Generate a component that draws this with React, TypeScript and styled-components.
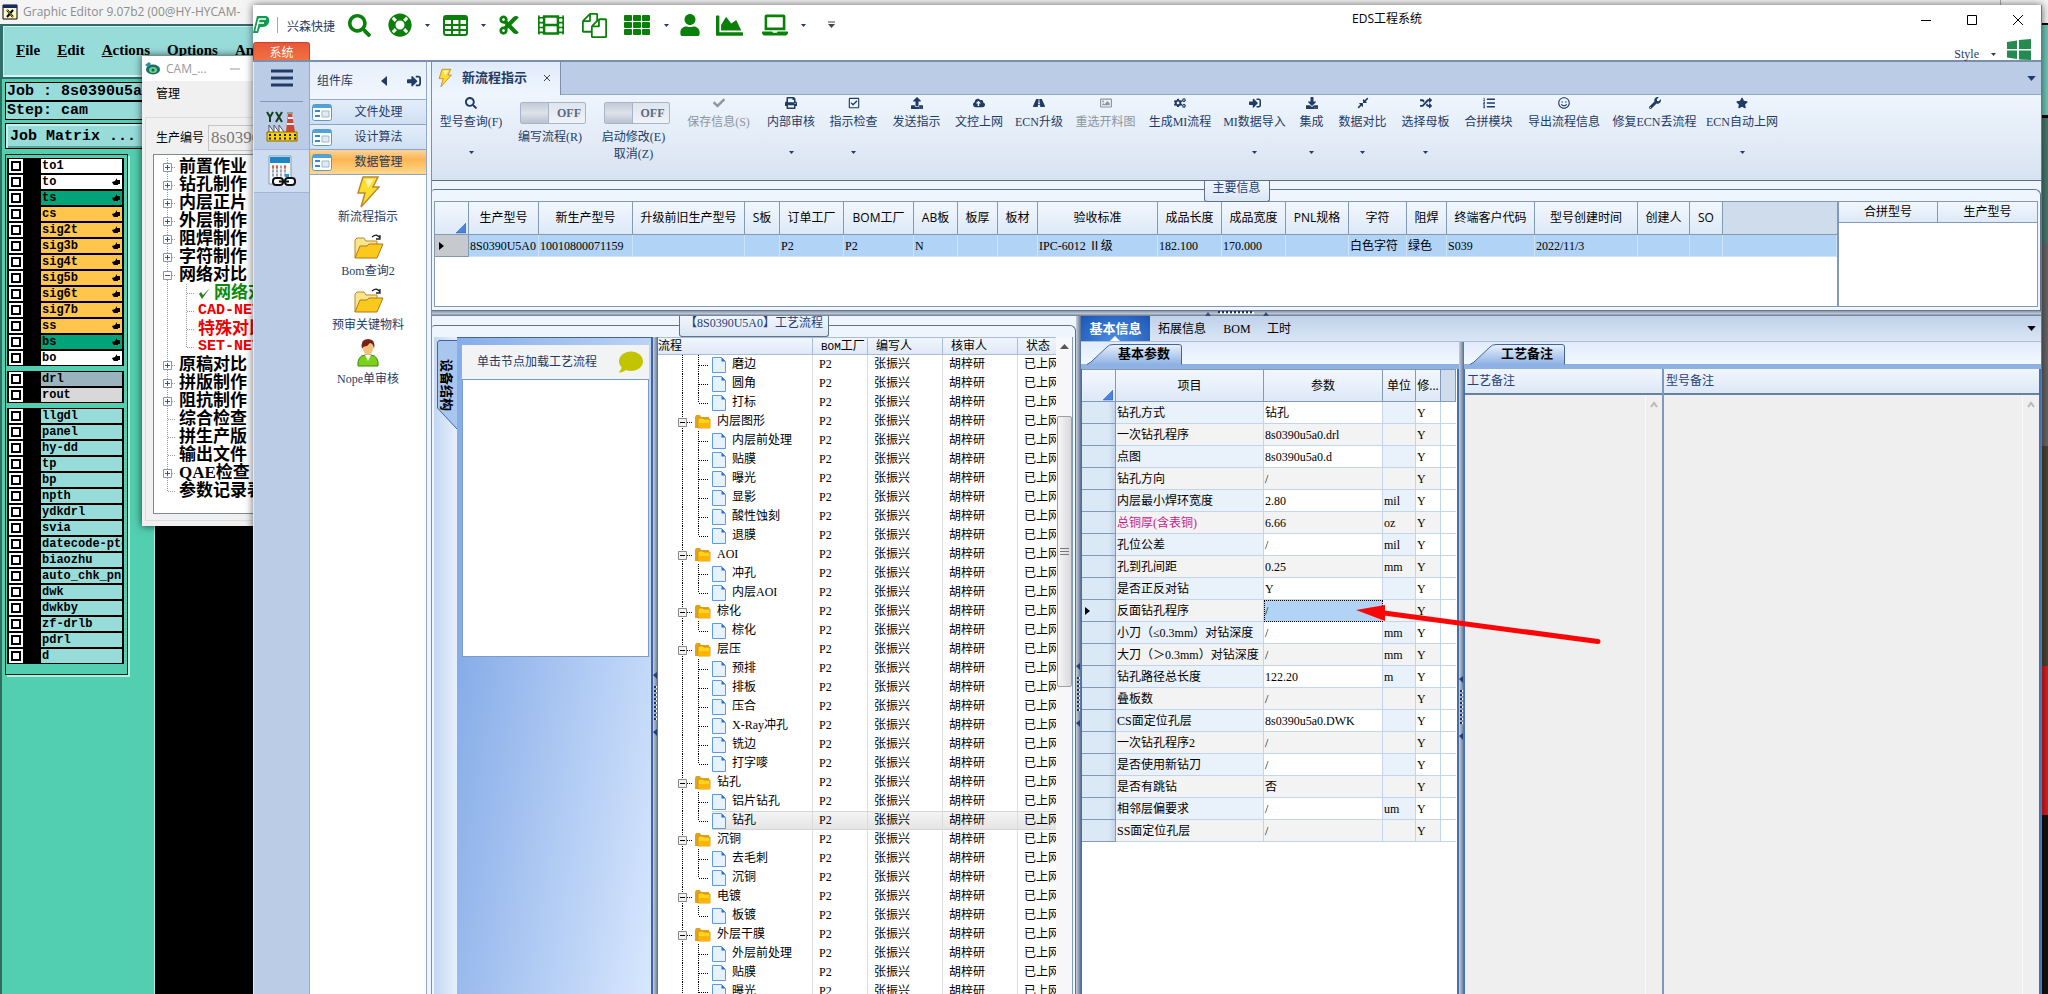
import React from 'react';
import styled, { createGlobalStyle, css } from 'styled-components';
import {
  FaSearch, FaLifeRing, FaCut, FaFilm, FaUser, FaChartArea, FaLaptop, FaCheck, FaPrint,
  FaRegCheckSquare, FaUpload, FaCloudUploadAlt, FaRoad, FaRegImage, FaCogs, FaSignInAlt, FaDownload,
  FaCompressAlt, FaRandom, FaListOl, FaRegSmile, FaWrench, FaStar, FaComment,
} from 'react-icons/fa';

const song = '"Liberation Serif", "Noto Sans CJK SC", serif';
const yahei = '"Open Sans", "Noto Sans CJK SC", sans-serif';
const mono = '"Liberation Mono", "Noto Sans CJK SC", monospace';
const navy = '#1f3b66';
const line = '#8299b8';

const Global = createGlobalStyle`
  * { box-sizing: border-box; }
  html, body { margin: 0; height: 100%; overflow: hidden; }
  body { font: 12px/16px ${song}; color: #000; background: #000; }
  button { font: inherit; color: inherit; background: none; border: 0; padding: 0; margin: 0; }
  table { border-collapse: separate; border-spacing: 0; table-layout: fixed; }
  th { font-weight: normal; }
  td, th { padding: 0; white-space: nowrap; overflow: hidden; }
`;

const Desktop = styled.main`
  position: relative;
  height: 100vh;
  overflow: hidden;
  background: #000;
`;

/* ---------- Graphic Editor window ---------- */

const EditorWindow = styled.section`
  position: absolute;
  inset: 0;
  display: flex;
  flex-direction: column;
  background: #000;
`;
const EditorTitle = styled.header`
  flex: none;
  display: flex;
  align-items: center;
  gap: 5px;
  height: 24px;
  padding-left: 2px;
  background: #f4f4f4;
  color: #8c8c8c;
  font: 12px/24px ${yahei};
  white-space: nowrap;
`;
const EditorMenu = styled.nav`
  flex: none;
  display: flex;
  gap: 17px;
  height: 55px;
  padding: 15px 0 0 13px;
  background: #98dcda;
  border: solid #2f6d68;
  border-width: 2px 0 2px 3px;
  box-shadow: inset 1px 1px #c8f0ee, inset 0 -2px #d6f5f3;
`;
const EditorMenuItem = styled.button`
  height: 18px;
  font: bold 15px/18px ${song};
  &::first-letter { text-decoration: underline; }
`;
const EditorBody = styled.div`
  flex: 1;
  width: 155px;
  padding: 3px 0 0 3px;
  background: #52cfb0;
  border-left: 2px solid #2f6d5c;
  border-right: 1px solid #b5eedd;
`;
const JobLine = styled.div<{ $button?: boolean }>`
  height: ${p => (p.$button ? 26 : 19)}px;
  margin-top: ${p => (p.$button ? 3 : 0)}px;
  margin-right: -40px;
  padding-left: ${p => (p.$button ? 4 : 1)}px;
  background: #98dcda;
  border: 1px solid #000;
  box-shadow: ${p => (p.$button ? 'inset 2px 2px #c8f0ee, inset -2px -2px #5aa9a0' : 'none')};
  font: bold 15px/${p => (p.$button ? 25 : 18)}px ${mono};
  white-space: pre;
`;
const LayerFrame = styled.div`
  display: flex;
  flex-direction: column;
  gap: 5px;
  width: 123px;
  height: 521px;
  margin-top: 5px;
  padding: 3px 3px 0 1px;
  border: 1px solid #04251c;
  box-shadow: 2px 2px #b5eedd;
`;
const LayerGroup = styled.ul`
  margin: 0;
  padding: 0;
  list-style: none;
  background: #000;
`;
const LayerRow = styled.li`
  display: flex;
  height: 16px;
  padding: 1px 2px;
`;
const LayerCheck = styled.input`
  appearance: none;
  width: 14px;
  height: 14px;
  margin: 0 18px 0 0;
  flex: none;
  background: #fff;
  border: 2px solid #fff;
  box-shadow: inset 0 0 0 2px #000;
`;
const LayerName = styled.label<{ $bg: string }>`
  flex: 1;
  display: flex;
  justify-content: space-between;
  align-items: center;
  overflow: hidden;
  padding: 0 2px 0 1px;
  background: ${p => p.$bg};
  font: bold 12px/14px ${mono};
  white-space: nowrap;
`;

const layerGroups: [string, string, boolean?][][] = [
  [
    ['to1', '#fff'], ['to', '#fff', true], ['ts', '#00a478', true], ['cs', '#ffc54c', true],
    ['sig2t', '#ffc54c', true], ['sig3b', '#ffc54c', true], ['sig4t', '#ffc54c', true],
    ['sig5b', '#ffc54c', true], ['sig6t', '#ffc54c', true], ['sig7b', '#ffc54c', true],
    ['ss', '#ffc54c', true], ['bs', '#00a478', true], ['bo', '#fff', true],
  ],
  [['drl', '#9bb3bd'], ['rout', '#d8d8d8']],
  ['llgdl', 'panel', 'hy-dd', 'tp', 'bp', 'npth', 'ydkdrl', 'svia', 'datecode-ptd', 'biaozhu',
    'auto_chk_pnl', 'dwk', 'dwkby', 'zf-drlb', 'pdrl', 'd'].map(n => [n, '#98dcda'] as [string, string]),
];

const Hand = () => (
  <svg width="8" height="8" viewBox="0 0 8 8"><path d="M0 4l3-1 2-3v2h3v4H6v1H2L1 6z" /></svg>
);
const XIcon = () => (
  <svg width="16" height="16" viewBox="0 0 16 16">
    <path d="M1 1h14v14H1z" fill="#fffbd0" stroke="#000" /><path d="M1 1h14v3H1z" fill="#122a66" />
    <path d="M5 6l6 7M11 6l-6 7" stroke="#000" strokeWidth="2" /><path d="M5 6l6 7" stroke="#d9c400" />
  </svg>
);

const GraphicEditor = () => (
  <EditorWindow>
    <EditorTitle><XIcon />Graphic Editor 9.07b2 (00@HY-HYCAM-</EditorTitle>
    <EditorMenu>
      {['File', 'Edit', 'Actions', 'Options', 'Ana'].map(m => <EditorMenuItem key={m}>{m}</EditorMenuItem>)}
    </EditorMenu>
    <EditorBody>
      <JobLine>Job : 8s0390u5a</JobLine>
      <JobLine>Step: cam</JobLine>
      <JobLine $button>Job Matrix ...</JobLine>
      <LayerFrame>
        {layerGroups.map((g, i) => (
          <LayerGroup key={i}>
            {g.map(([name, bg, hand]) => (
              <LayerRow key={name}>
                <LayerCheck type="checkbox" id={`layer-${name}`} />
                <LayerName htmlFor={`layer-${name}`} $bg={bg}>{name}{hand && <Hand />}</LayerName>
              </LayerRow>
            ))}
          </LayerGroup>
        ))}
      </LayerFrame>
    </EditorBody>
  </EditorWindow>
);

const SideWindow = styled.section`
  position: absolute;
  inset: 0 0 0 auto;
  width: 48px;
  background: linear-gradient(#f4f4f4 23px, #000 23px 25px, #6fc9b9 25px 115px, #000 115px 118px, #47796e 118px 243px,
    #666 243px 446px, #4a4433 446px 666px, #d81e1e 666px 815px, #111 815px);
  border-left: 1px solid #aaa;
`;

/* ---------- CAM window ---------- */

const CamWindow = styled.section`
  position: absolute;
  left: 142px;
  top: 56px;
  width: 240px;
  height: 470px;
  display: flex;
  flex-direction: column;
  background: #f0f0f0;
  box-shadow: 0 0 8px rgba(0, 0, 0, 0.7);
`;
const CamTitle = styled.header`
  display: flex;
  align-items: center;
  height: 25px;
  padding-left: 3px;
  background: #fff;
  color: #999;
  font: 12px/24px ${yahei};
  gap: 6px;
  & > span { width: 58px; }
`;
const CamMenu = styled.button`
  align-self: flex-start;
  height: 25px;
  margin: 0 0 11px 14px;
  font-size: 12px;
`;
const CamGroup = styled.div`
  flex: 1;
  display: flex;
  flex-direction: column;
  margin: 0 0 5px 3px;
  border: 1px solid #dcdcdc;
`;
const CamField = styled.label`
  display: flex;
  align-items: center;
  gap: 4px;
  height: 26px;
  margin: 7px 0 3px 10px;
`;
const CamInput = styled.input`
  width: 120px;
  height: 26px;
  padding: 0 2px;
  border: 1px solid #c5c5c5;
  background: #f0f0f0;
  color: #777;
  font: 17px/24px ${song};
`;
const CamTree = styled.ul`
  flex: 1;
  margin: 0 0 6px 7px;
  padding: 3px 0 0 9px;
  list-style: none;
  background: #fff;
  border: 1px solid #7a8a99;
`;
const CamNode = styled.li<{ $color?: string; $latin?: boolean }>`
  display: flex;
  align-items: center;
  gap: 3px;
  height: 18px;
  color: ${p => p.$color ?? '#000'};
  font: bold ${p => (p.$latin ? 15 : 17)}px/18px ${p => (p.$latin ? mono : song)};
  white-space: nowrap;
`;
type CamRow = { t: string; k: '+' | '-' | '.' | 'c'; c?: string; end?: boolean; ok?: boolean; latin?: boolean };
const camRows: CamRow[] = [
  { t: '前置作业', k: '+' }, { t: '钻孔制作', k: '+' }, { t: '内层正片', k: '+' }, { t: '外层制作', k: '+' },
  { t: '阻焊制作', k: '+' }, { t: '字符制作', k: '+' }, { t: '网络对比', k: '-' },
  { t: '网络对比', k: 'c', c: '#0b8a0b', ok: true }, { t: 'CAD-NET', k: 'c', c: '#e00', latin: true },
  { t: '特殊对比', k: 'c', c: '#e00' }, { t: 'SET-NET', k: 'c', c: '#e00', end: true, latin: true },
  { t: '原稿对比', k: '+' }, { t: '拼版制作', k: '+' }, { t: '阻抗制作', k: '+' }, { t: '综合检查', k: '.' },
  { t: '拼生产版', k: '.' }, { t: '输出文件', k: '.' }, { t: 'QAE检查', k: '+' }, { t: '参数记录表', k: '.', end: true },
];
const CamGuide = ({ row }: { row: CamRow }) => {
  const child = row.k === 'c';
  return (
    <svg width={child ? 32 : 13} height="18" fill="none" stroke="#999">
      <path d={`M4.5 0V${!child && row.end ? 9 : 18}`} strokeDasharray="1 1" />
      {child
        ? <path d={`M23.5 0V${row.end ? 9 : 18}M24 9.5h8`} strokeDasharray="1 1" />
        : <path d="M5 9.5h8" strokeDasharray="1 1" />}
      {(row.k === '+' || row.k === '-') && (
        <>
          <path d="M.5 5.5h8v8h-8z" fill="#fff" stroke="#8a96a8" />
          <path d={row.k === '+' ? 'M2 9.5h5M4.5 7v5' : 'M2 9.5h5'} stroke="#3b4f9a" />
        </>
      )}
    </svg>
  );
};
const CamTool = () => (
  <CamWindow>
    <CamTitle>
      <svg width="15" height="13" viewBox="0 0 15 13">
        <ellipse cx="8" cy="7.500" rx="7" ry="5" fill="#1b6f6a" /><ellipse cx="8" cy="8" rx="4" ry="3" fill="#6fd08c" />
        <circle cx="8" cy="8" r="1.500" fill="#164" /><path d="M0 3l4-3 2 2-3 3z" fill="#2790a0" />
      </svg>
      <span>CAM_...</span>
      <svg width="10" height="2"><path d="M0 1h10" stroke="#999" /></svg>
    </CamTitle>
    <CamMenu>管理</CamMenu>
    <CamGroup>
      <CamField>生产编号<CamInput defaultValue="8s0390u5a0" /></CamField>
      <CamTree>
        {camRows.map((r, i) => (
          <CamNode key={i} $color={r.c} $latin={r.latin}>
            <CamGuide row={r} />
            {r.ok && <svg width="13" height="13" viewBox="0 0 13 13"><path d="M1 7l3 5 8-11-7 7-2-3z" fill="#2e7d1e" /></svg>}
            {r.t}
          </CamNode>
        ))}
      </CamTree>
    </CamGroup>
  </CamWindow>
);

/* ---------- EDS window ---------- */

const EdsWindow = styled.section`
  position: absolute;
  left: 253px;
  right: 6px;
  top: 5px;
  bottom: -80px;
  display: flex;
  flex-direction: column;
  background: #fff;
  border-right: 1px solid #66788f;
  box-shadow: 0 0 8px rgba(0, 0, 0, 0.6);
  color: ${navy};
`;
const TitleBar = styled.header`
  flex: none;
  display: flex;
  height: 34px;
`;
const QuickBar = styled.div`
  width: 618px;
  padding-top: 6px;
  display: flex;
  align-items: center;
  color: #0a800a;
`;
const Brand = styled.span`
  width: 61px;
  margin: 3px 0 0 9px;
  color: ${navy};
`;
const QuickButton = styled.button<{ $w: number }>`
  width: ${p => p.$w}px;
  height: 28px;
  display: flex;
  align-items: center;
  gap: 13px;
  svg { flex: none; }
`;
const AppTitle = styled.h1`
  flex: 1;
  margin: 0;
  text-align: center;
  color: #000;
  font: 12px/28px ${yahei};
`;
const WindowButton = styled.button`
  width: 46px;
  height: 30px;
  display: grid;
  place-items: center;
`;
const SystemRow = styled.div`
  flex: none;
  display: flex;
  align-items: flex-end;
  height: 23px;
  padding-right: 9px;
  border-bottom: 2px solid #7b8fad;
`;
const SystemTab = styled.button`
  width: 57px;
  height: 18px;
  margin-right: auto;
  background: linear-gradient(#e8583a, #f2713f);
  border: 1px solid #c7442a;
  border-bottom: 0;
  border-radius: 3px 3px 0 0;
  color: #fff;
  line-height: 20px;
  overflow: hidden;
`;
const StyleButton = styled.button`
  display: flex;
  align-items: center;
  gap: 12px;
  margin-right: 11px;
  line-height: 12px;
`;
const Caret = ({ size = 5, color = navy }: { size?: number; color?: string }) => (
  <svg width={size} height={(size + 1) / 2} viewBox="0 0 10 6"><path d="M0 0h10L5 6z" fill={color} /></svg>
);

const Workspace = styled.div`
  flex: 1;
  min-height: 0;
  display: flex;
  background: #eef5fd;
`;
const Rail = styled.nav`
  width: 56px;
  display: flex;
  flex-direction: column;
  align-items: center;
  background: #bacce6;
  border-left: 1px solid #e3ebf7;
`;
const RailButton = styled.button<{ $h: number; $active?: boolean }>`
  width: 100%;
  height: ${p => p.$h}px;
  display: grid;
  place-items: center;
  ${p => p.$active && css`background: #cddcf0; border: solid #a3b6d3; border-width: 1px 0;`}
`;
const RailRule = styled.hr`
  width: 43px;
  margin: 6px 0 0;
  border: 0;
  border-top: 1px solid #8299bd;
`;
const Library = styled.aside`
  width: 118px;
  margin-right: 4px;
  display: flex;
  flex-direction: column;
  background: #fff;
  border: solid #93a9cd;
  border-width: 0 1px;
`;
const LibraryHead = styled.header`
  display: flex;
  align-items: center;
  height: 38px;
  padding-left: 7px;
  background: linear-gradient(#e6effa, #f2f7fe);
  border-bottom: 1px solid #93a9cd;
  font: 12px/36px ${yahei};
  & > span { width: 64px; }
`;
const HeadButton = styled.button`
  width: 26px;
  height: 20px;
  display: flex;
  align-items: center;
`;
const LibraryTab = styled.button<{ $active?: boolean }>`
  flex: none;
  display: flex;
  align-items: center;
  height: 25px;
  padding-left: 2px;
  border-bottom: 1px solid #8aa3c9;
  background: ${p => (p.$active ? 'linear-gradient(#fbd49c, #fbb552 40%, #ffd98e)' : 'linear-gradient(#e4eefa, #cfdff2)')};
  & > span { flex: 1; padding-right: 1px; text-align: center; }
`;
const LibraryItem = styled.button`
  display: flex;
  flex-direction: column;
  align-items: center;
  height: 54px;
  padding-top: 1px;
  gap: 1px;
`;

const Main = styled.div`
  flex: 1;
  min-width: 0;
  display: flex;
  flex-direction: column;
  border-left: 1px solid #7b8fad;
`;
const DocTabs = styled.div`
  flex: none;
  display: flex;
  align-items: center;
  justify-content: space-between;
  height: 33px;
  padding-right: 5px;
  background: #bacce6;
  border-bottom: 1px solid #93a9c9;
`;
const DocTab = styled.div`
  display: flex;
  align-items: center;
  width: 129px;
  height: 33px;
  padding-left: 6px;
  gap: 10px;
  background: linear-gradient(#dfeafa, #eff6fe);
  border-right: 1px solid #7b8fad;
  font: bold 13px/32px ${song};
  white-space: nowrap;
`;
const CloseTab = styled.button`
  display: grid;
  margin-left: 6px;
`;
const Ribbon = styled.div`
  flex: none;
  display: flex;
  height: 86px;
  background: linear-gradient(#eef5fd, #d8e3f1);
  border-bottom: 1px solid #5b6b82;
`;
const RibbonButton = styled.button<{ $w: number }>`
  width: ${p => p.$w}px;
  height: 70px;
  padding-top: 2px;
  display: flex;
  flex-direction: column;
  align-items: center;
  gap: 5px;
  line-height: 16px;
  white-space: nowrap;
  &:disabled { color: #8f959d; }
  & > svg { flex: none; }
  & > svg + svg { margin-top: 16px; }
`;
const RibbonSwitch = styled.div<{ $w: number }>`
  width: ${p => p.$w}px;
  padding-top: 7px;
  display: flex;
  flex-direction: column;
  align-items: center;
  line-height: 17px;
  text-align: center;
`;
const Switch = styled.label`
  display: flex;
  width: 66px;
  height: 22px;
  margin: 0 0 5px 6px;
  background: linear-gradient(#dfe5ee, #f0f3f8);
  border: 1px solid #a9b5c6;
  border-radius: 2px;
  color: #5b6b82;
  font: bold 12px/20px ${song};
`;
const SwitchKnob = styled.input`
  appearance: none;
  width: 28px;
  height: 20px;
  margin: 0 8px 0 0;
  background: linear-gradient(#c3cbd8, #dde2ea 50%, #b9c2d0);
  border-right: 1px solid #a9b5c6;
`;

const Group = styled.section`
  position: relative;
  min-height: 0;
  display: flex;
  padding-top: 8px;
  background: #eef5fd;
`;
const GroupTop = styled(Group)`
  flex: none;
  height: 130px;
  border-bottom: 1px solid #66788f;
`;
const GroupFrame = styled.div`
  flex: 1;
  min-width: 0;
  display: flex;
  padding: 11px 2px 3px 2px;
  border: solid #5f728e;
  border-width: 1px 1px 0 0;
  border-radius: 3px 6px 0 0;
`;
const GroupLabel = styled.h2<{ $w: number }>`
  position: absolute;
  z-index: 1;
  top: 0;
  left: 50%;
  width: ${p => p.$w}px;
  height: 21px;
  margin: 0 0 0 -${p => p.$w / 2}px;
  background: linear-gradient(#f1f6fd, #dbe6f4);
  border: 1px solid #5f728e;
  border-top-width: 0;
  border-radius: 0 0 3px 3px;
  color: #24407a;
  font: 12px/15px ${song};
  text-align: center;
  white-space: nowrap;
`;
const Sheet = styled.div<{ $w?: number }>`
  flex: ${p => (p.$w ? 'none' : 1)};
  width: ${p => (p.$w ? p.$w + 'px' : 'auto')};
  min-width: 0;
  background: #fff;
  border: 1px solid ${line};
  color: #000;
`;
const InfoTable = styled.table<{ $head: number }>`
  width: 100%;
  th {
    height: ${p => p.$head}px;
    background: linear-gradient(#f2f7fe, #dde9f7);
    border: solid ${line};
    border-width: 0 1px 1px 0;
    font: 12px/20px ${yahei};
  }
  th:last-child { border-right: 0; }
  td { height: 22px; padding-left: 1px; background: #b0d3f6; border: solid #cfe3f8; border-width: 0 1px 1px 0; }
`;
const CornerCell = styled.th`
  && { vertical-align: bottom; text-align: right; padding-right: 2px; line-height: 0; }
`;
const FillHead = styled.th`
  && { background: #cfdcec; }
`;
const MarkerCell = styled.td`
  && { background: #c6cace; border-color: ${line}; padding-left: 4px; }
`;

const infoCols: [string, number, string][] = [
  ['生产型号', 70, '8S0390U5A0'], ['新生产型号', 94, '10010800071159'], ['升级前旧生产型号', 112, ''], ['S板', 35, ''],
  ['订单工厂', 64, 'P2'], ['BOM工厂', 70, 'P2'], ['AB板', 44, 'N'], ['板厚', 40, ''], ['板材', 40, ''],
  ['验收标准', 120, 'IPC-6012 Ⅱ级'], ['成品长度', 64, '182.100'], ['成品宽度', 64, '170.000'], ['PNL规格', 63, ''],
  ['字符', 58, '白色字符'], ['阻焊', 40, '绿色'], ['终端客户代码', 88, 'S039'], ['型号创建时间', 103, '2022/11/3'],
  ['创建人', 52, ''], ['SO', 33, ''],
];
const Corner = () => <svg width="11" height="14"><path d="M11 3v10H1z" fill="#4a84de" stroke="#2a5fb0" strokeWidth=".5" /></svg>;
const Marker = () => <svg width="5" height="8"><path d="M0 0l5 4-5 4z" /></svg>;

const Splitter = styled.div<{ $across?: boolean }>`
  flex: none;
  display: grid;
  place-items: center;
  overflow: hidden;
  ${p => (p.$across
    ? 'height: 5px; background: linear-gradient(#8896a8, #b9c4d1 50%, #68788e);'
    : 'width: 5px; background: linear-gradient(90deg, #c6d0dc, #8a98ab 60%, #4e6c9b);')}
`;
const Grip = ({ across }: { across?: boolean }) => across ? (
  <svg width="64" height="5">
    <path d="M0 5l3-4 3 4zM58 5l3-4 3 4z" fill="#3a4d75" />
    <path d="M14 2h36" stroke="#fff" strokeWidth="2" strokeDasharray="2 2" strokeDashoffset="-1" />
    <path d="M13 1h36" stroke="#1f2f55" strokeWidth="2" strokeDasharray="2 2" />
  </svg>
) : (
  <svg width="5" height="64">
    <path d="M4 0v7L0 3zM4 57v7l-4-4z" fill="#223d7a" />
    <path d="M3 14v36" stroke="#fff" strokeWidth="2" strokeDasharray="2 2" />
    <path d="M2 14v36" stroke="#1f2f66" strokeWidth="2" strokeDasharray="2 2" />
  </svg>
);

const Lower = styled.div`
  flex: 1;
  min-height: 0;
  display: flex;
  background: #eef5fd;
`;
const FlowGroup = styled(Group)`
  width: 644px;
  padding-top: 9px;
`;
const VerticalTabs = styled.div`
  flex: none;
  position: relative;
  width: 23px;
  background: linear-gradient(90deg, #c3d7f3, #e7f0fc);
`;
const VerticalTab = styled.button`
  position: absolute;
  left: 2px;
  top: 3px;
  width: 21px;
  height: 90px;
  & > svg { position: absolute; left: 0; top: 0; }
  & > span {
    position: relative;
    display: block;
    height: 70px;
    padding: 0 2px;
    writing-mode: vertical-rl;
    text-orientation: sideways;
    text-align: center;
    font: bold 13px/17px ${song};
    color: #000;
  }
`;
const DevicePanel = styled.div`
  width: 196px;
  display: flex;
  flex-direction: column;
  padding: 7px 2px 0 5px;
  border: solid #3f66a3;
  border-width: 1px 2px 0 0;
  background: linear-gradient(90deg, #86ade8, #bcd3f4);
`;
const DeviceHead = styled.header`
  display: flex;
  align-items: center;
  justify-content: space-between;
  height: 34px;
  padding: 0 6px 0 15px;
  background: #f2f3f5;
`;
const DeviceList = styled.div`
  height: 278px;
  background: #fff;
  border: 1px solid #7c9bc9;
`;
const DeviceRest = styled.div`
  flex: 1;
  margin: 0 -2px 0 -5px;
  background: linear-gradient(100deg, #86ace8, #dceaff);
`;
const TreePane = styled.div`
  flex: 1;
  min-width: 0;
  display: flex;
  background: #fff;
  border-right: 1px solid ${line};
  color: #000;
`;
const TreeClip = styled.div`
  flex: 1;
  min-width: 0;
  overflow: hidden;
`;
const TreeTable = styled.table`
  width: 100%;
  th {
    height: 18px;
    padding-left: 8px;
    background: linear-gradient(#f1f6fd, #dfe9f6);
    border: solid #a9bdd8;
    border-width: 1px 1px 1px 0;
    text-align: left;
    line-height: 14px;
  }
  th:first-child { padding-left: 0; }
  td { height: 19px; padding-left: 6px; border-right: 1px solid #dcdcdc; line-height: 17px; }
  td:first-child { padding-left: 0; }
  td:last-child, th:last-child { border-right: 0; }
`;
const Latin = styled.span`
  font: 11px/14px ${mono};
`;
const TreeName = styled.div`
  display: flex;
  height: 19px;
  align-items: center;
`;
const TreeText = styled.span`
  flex: 1;
  display: flex;
  align-items: center;
  gap: 6px;
  height: 19px;
`;
const TreeRow = styled.tr<{ $active?: boolean }>`
  ${p => p.$active && css`
    td, ${TreeText} { background: linear-gradient(#f5f5f5, #e4e4e4); box-shadow: inset 0 1px #d5d5d5, inset 0 -1px #d5d5d5; }
    td:first-child { background: #fff; box-shadow: none; }
  `}
`;
const ScrollTrack = styled.div`
  width: 16px;
  display: flex;
  flex-direction: column;
  align-items: center;
  padding-top: 7px;
  background: #f7f7f9;
`;
const ScrollThumb = styled.div`
  display: grid;
  place-items: center;
  width: 15px;
  height: 271px;
  margin-top: 67px;
  background: linear-gradient(90deg, #f6f6f6, #d9d9dc);
  border: 1px solid #9a9fa8;
  border-radius: 2px;
`;
const treeData: [string, string[]][] = [
  ['', ['磨边', '圆角', '打标']],
  ['内层图形', ['内层前处理', '贴膜', '曝光', '显影', '酸性蚀刻', '退膜']],
  ['AOI', ['冲孔', '内层AOI']], ['棕化', ['棕化']],
  ['层压', ['预排', '排板', '压合', 'X-Ray冲孔', '铣边', '打字嘜']],
  ['钻孔', ['铝片钻孔', '钻孔*']], ['沉铜', ['去毛刺', '沉铜']], ['电镀', ['板镀']],
  ['外层干膜', ['外层前处理', '贴膜', '曝光', '显影']],
];
const FileIcon = () => (
  <svg width="14" height="16" viewBox="0 0 14 16">
    <path d="M.5.5h9l4 4v11H.5z" fill="#e6f2fe" stroke="#5b9be6" /><path d="M9.500 .5l4 4h-4z" fill="#2a6fd6" />
  </svg>
);
const FolderIcon = () => (
  <svg width="16" height="14" viewBox="0 0 16 14">
    <path d="M0 2l1-2h4l1 2h8v11H0z" fill="#e3a21a" /><path d="M3 4l1-1h4l1 1h6v9H3z" fill="#ffd21e" stroke="#c98a08" strokeWidth=".8" />
    <path d="M4 8h11v5H4z" fill="#ffb400" />
  </svg>
);
const TreeGuide = ({ leaf, end }: { leaf?: boolean; end?: boolean }) => (
  <svg width={leaf ? 54 : 37} height="19" fill="none" stroke="#000">
    <path d="M24.500 0v19" strokeDasharray="1 1" />
    {leaf
      ? <path d={`M40.500 0V${end ? 10 : 19}M41 10.500h9`} strokeDasharray="1 1" />
      : <><path d="M29 10.500h6" strokeDasharray="1 1" /><path d="M20.500 6.500h8v8h-8z" fill="#f2f2f2" stroke="#888" /><path d="M22 10.500h5" /></>}
  </svg>
);
const TreeEntry = ({ name, leaf, end, active }: { name: string; leaf?: boolean; end?: boolean; active?: boolean }) => (
  <TreeRow $active={active}>
    <td><TreeName><TreeGuide leaf={leaf} end={end} /><TreeText>{leaf ? <FileIcon /> : <FolderIcon />}{name}</TreeText></TreeName></td>
    <td>P2</td><td>张振兴</td><td>胡梓研</td><td>已上网</td>
  </TreeRow>
);

const Details = styled.div`
  flex: 1;
  min-width: 0;
  display: flex;
  flex-direction: column;
`;
const DetailTabs = styled.div`
  flex: none;
  display: flex;
  align-items: center;
  height: 26px;
  padding-right: 5px;
  background: linear-gradient(#bfd1e9, #dae6f5);
  border-bottom: 1px solid #b3bfce;
  & > svg { margin-left: auto; }
`;
const DetailTab = styled.button<{ $w: number; $active?: boolean }>`
  position: relative;
  width: ${p => p.$w}px;
  height: 25px;
  color: #000;
  line-height: 22px;
  ${p => p.$active && css`
    background: radial-gradient(ellipse at bottom, #4c8fe6, #1c55b4);
    color: #fff;
    font: bold 13px/22px ${song};
    &::after { content: ''; position: absolute; left: 29px; bottom: 0; border: 5px solid transparent; border-bottom-color: #fff; border-top: 0; }
  `}
`;
const DetailBody = styled.div`
  flex: 1;
  min-height: 0;
  display: flex;
`;
const Pane = styled.section<{ $w?: number }>`
  flex: ${p => (p.$w ? 'none' : 1)};
  width: ${p => (p.$w ? p.$w + 'px' : 'auto')};
  min-width: 0;
  display: flex;
  flex-direction: column;
`;
const PaneTabs = styled.div`
  flex: none;
  height: 27px;
  padding: 2px 0 0 6px;
  background: linear-gradient(#e0ebfb, #f3f8ff 80%, #8fb2e4 81%);
`;
const PaneTab = styled.h3`
  position: relative;
  width: 95px;
  height: 21px;
  margin: 0;
  padding-left: 31px;
  font: bold 13px/19px ${song};
  color: #000;
  & > svg { position: absolute; left: 0; top: 0; z-index: 0; }
  & > span { position: relative; }
`;
const PaneBox = styled.div`
  flex: 1;
  min-height: 0;
  overflow: hidden;
  display: flex;
  background: #fff;
  border: solid #4470b2;
  border-width: 0 2px 0 1px;
`;
const ParamTable = styled.table`
  width: 374px;
  height: max-content;
  color: #000;
  th {
    height: 33px;
    background: linear-gradient(#f2f7fe, #dde9f7);
    border: solid ${line};
    border-width: 1px 1px 1px 0;
    font: 12px/20px ${yahei};
  }
  td { height: 22px; padding-left: 1px; border: solid #c3d5ec; border-width: 0 1px 1px 0; }
  tbody tr:nth-child(odd) td:nth-child(2), tbody tr:nth-child(odd) td:nth-child(4) { background: #e9f1fb; }
  tbody tr:nth-child(even) td { background: #f3f3f3; }
  tbody tr td:last-child, tbody tr:nth-child(even) td:last-child { background: #fff; border-right: 0; }
  tbody tr td:first-child, tbody tr:nth-child(even) td:first-child {
    padding-left: 3px;
    background: linear-gradient(90deg, #dbe8f5 80%, #c3d5ea);
    border-color: ${line};
  }
`;
const ParamName = styled.td<{ $key?: boolean }>`
  color: ${p => (p.$key ? '#c71a8a' : '#000')};
`;
const ParamValue = styled.td<{ $active?: boolean }>`
  ${p => p.$active && css`&&&& { background: #b0d3f6; outline: 1px dotted #000; outline-offset: -1px; }`}
`;
const params: [string, string, string][] = [
  ['钻孔方式', '钻孔', ''], ['一次钻孔程序', '8s0390u5a0.drl', ''], ['点图', '8s0390u5a0.d', ''], ['钻孔方向', '/', ''],
  ['内层最小焊环宽度', '2.80', 'mil'], ['总铜厚(含表铜)', '6.66', 'oz'], ['孔位公差', '/', 'mil'], ['孔到孔间距', '0.25', 'mm'],
  ['是否正反对钻', 'Y', ''], ['反面钻孔程序', '/', ''], ['小刀（≤0.3mm）对钻深度', '/', 'mm'], ['大刀（＞0.3mm）对钻深度', '/', 'mm'],
  ['钻孔路径总长度', '122.20', 'm'], ['叠板数', '/', ''], ['CS面定位孔层', '8s0390u5a0.DWK', ''], ['一次钻孔程序2', '/', ''],
  ['是否使用新钻刀', '/', ''], ['是否有跳钻', '否', ''], ['相邻层偏要求', '/', 'um'], ['SS面定位孔层', '/', ''],
];
const Note = styled.div<{ $w?: number }>`
  flex: ${p => (p.$w ? 'none' : 1)};
  width: ${p => (p.$w ? p.$w + 'px' : 'auto')};
  display: flex;
  flex-direction: column;
  border-right: ${p => (p.$w ? '2px solid #7f98bb' : '0')};
`;
const NoteHead = styled.label`
  height: 26px;
  padding-left: 2px;
  background: linear-gradient(#f1f6fd, #dde8f6);
  border-bottom: 2px solid #66809f;
  color: #24407a;
  line-height: 24px;
`;
const NoteBody = styled.div`
  flex: 1;
  display: flex;
  background: #efefef;
  & > span { width: 17px; padding-top: 1px; text-align: center; border-left: 1px solid #f8f8f8; }
`;
const NoteText = styled.textarea`
  flex: 1;
  min-width: 0;
  border: 0;
  resize: none;
  background: transparent;
  outline: 0;
`;
const Chevron = () => <svg width="8" height="7" viewBox="0 0 8 7"><path d="M1 6l3-4 3 4" fill="none" stroke="#b8b8b8" strokeWidth="2" /></svg>;
const TabShape = () => (
  <svg width="96" height="21" viewBox="0 0 96 21">
    <defs><linearGradient id="tabFill" x2="0" y2="1"><stop stopColor="#e9f1fd" /><stop offset="1" stopColor="#8fb2e4" /></linearGradient></defs>
    <path d="M0 20.500L4 18 20 3Q22 .5 26 .5H92Q94.500 .5 94.500 3V20.500" fill="url(#tabFill)" stroke="#3f66a3" />
  </svg>
);

const BoltIcon = ({ w, h }: { w: number; h: number }) => (
  <svg width={w} height={h} viewBox="0 0 24 32"><path d="M7 1h15l-5 10h6L5 31l4-14H2z" fill="#ffdc2e" stroke="#b98a2c" strokeWidth="1.500" /><path d="M9 3h9l-6 9z" fill="#fff6a8" /></svg>
);
const BigFolder = () => (
  <svg width="31" height="32" viewBox="0 0 31 32">
    <path d="M2 28V10l2-2h7l2 3h11v4" fill="#fbe58a" stroke="#b8892a" /><path d="M2 28l5-12h7l2-2h14l-6 14z" fill="#fbc91e" stroke="#a97b1c" />
    <path d="M19 7q5-4 8 1m0-3v4h-4" fill="none" stroke="#222" strokeWidth="1.300" />
  </svg>
);
const PersonIcon = () => (
  <svg width="24" height="32" viewBox="0 0 24 32">
    <path d="M2 28q-1-10 7-11h6q8 1 7 11z" fill="#7bd11c" stroke="#3c8a0a" /><path d="M9 17l3 6 3-6z" fill="#fff" />
    <ellipse cx="12" cy="10" rx="5" ry="7" fill="#f3c27a" /><path d="M6 11Q4 1 12 1t6 10q-1-6-4-6l-3 3q-4 0-5 3z" fill="#7a1f1a" />
  </svg>
);
const ListIcon = () => (
  <svg width="20" height="17" viewBox="0 0 20 17">
    <rect x=".5" y=".5" width="19" height="16" rx="2" fill="#fff" stroke="#5c9ac6" /><path d="M1 1h18v3H1z" fill="#4fa3d8" />
    <path d="M3 7h5M3 12h5" stroke="#3a86d0" strokeWidth="2" /><path d="M10 7h7v6h-7z" fill="#dfeaf3" stroke="#9db8cc" />
  </svg>
);
const FactoryIcon = () => (
  <svg width="32" height="32" viewBox="0 0 32 32">
    <path d="M1 2l3 5v5M7 2L4 7M10 12l6-10M10 2l6 10" stroke="#123f1c" strokeWidth="2" fill="none" />
    <path d="M20 22l2-18h4l3 18z" fill="#d24335" /><path d="M22 8h5M21 14h7" stroke="#eee" strokeWidth="2" /><path d="M21 2h6v2h-6z" fill="#999" />
    <path d="M3 22v-7l5 7v-7l5 7v-7l5 7" fill="#fff" stroke="#556" /><path d="M1 22h30v9H1z" fill="#f5cf12" stroke="#8a6a00" />
    <path d="M3 25h27M3 28.500h27" stroke="#222" strokeWidth="2" strokeDasharray="2 3" />
  </svg>
);
const CalcIcon = () => (
  <svg width="30" height="32" viewBox="0 0 30 32">
    <path d="M2 1h22v28H2z" fill="#f6f8fa" stroke="#8a98a8" /><path d="M3 2h20v6H3z" fill="#1c86c8" />
    <path d="M5 12h16M5 16h16M5 20h16" stroke="#9aa6b4" strokeWidth="3" strokeDasharray="2 2" /><path d="M5 12h6M17 12h4" stroke="#e0603a" strokeWidth="3" strokeDasharray="2 2" />
    <path d="M18 19h4v4h-4z" fill="#18a0d0" />
    <rect x="5" y="22" width="24" height="9" rx="4" fill="#fff" />
    <g fill="none" stroke="#111" strokeWidth="2"><rect x="6" y="23" width="10" height="7" rx="3" /><rect x="18" y="23" width="10" height="7" rx="3" /><path d="M12 26.500h10" /></g>
  </svg>
);
const CopyIcon = () => (
  <svg width="25" height="25" viewBox="0 0 1792 1792" fill="currentColor">
    <path d="M1696 384q40 0 68 28t28 68v1216q0 40-28 68t-68 28h-960q-40 0-68-28t-28-68v-288h-544q-40 0-68-28t-28-68v-672q0-40 20-88t48-76l408-408q28-28 76-48t88-20h416q40 0 68 28t28 68v328q68-40 128-40h416zm-544 213l-299 299h299v-299zm-640-384l-299 299h299v-299zm196 647l316-316v-416h-384v416q0 40-28 68t-68 28h-416v640h512v-256q0-40 20-88t48-76zm956 804v-1152h-384v416q0 40-28 68t-68 28h-416v640h896z" />
  </svg>
);
const TableIcon = () => (
  <svg width="25" height="21" viewBox="0 0 25 21">
    <rect x="1" y="1" width="23" height="19" rx="2" fill="#fff" stroke="currentColor" strokeWidth="2" />
    <path d="M1 1h23v4H1z" fill="currentColor" /><path d="M1 10h23M1 15h23M9 4v16M16.500 4v16" stroke="currentColor" strokeWidth="2" />
  </svg>
);
const GridIcon = () => (
  <svg width="27" height="20" viewBox="0 0 27 20" fill="currentColor">
    {[0, 7, 14].flatMap(y => [0, 9, 18].map(x => <rect key={`${x}-${y}`} x={x} y={y} width="8" height="6" rx="1" />))}
  </svg>
);
const LogoIcon = () => (
  <svg width="17" height="18" viewBox="0 0 17 18">
    <path d="M4 0h9q4 1 3 6t-7 5H7l-2 6H0z" fill="#129a50" /><path d="M6 3h7M5 7h6M6 3L3 15" stroke="#fff" strokeWidth="1.500" fill="none" />
  </svg>
);
const WindowsIcon = () => (
  <svg width="25" height="21" viewBox="0 0 25 21"><path d="M0 3l10-1.500V10H0zM12 1l12-1v10H12zM0 11.500h10V20L0 18.500zM12 11.500h12V21l-12-.5z" fill="#258a50" /></svg>
);

type Quick = [React.ReactNode, number, string, boolean?];
const quick: Quick[] = [
  [<FaSearch size={23} />, 40, '搜索'], [<FaLifeRing size={24} />, 55, '帮助', true], [<TableIcon />, 55, '表格', true],
  [<FaCut size={22} />, 40, '剪切'], [<FaFilm size={26} />, 44, '影片'], [<CopyIcon />, 42, '复制'],
  [<GridIcon />, 55, '网格', true], [<FaUser size={22} />, 37, '用户'], [<FaChartArea size={27} />, 46, '图表'],
  [<FaLaptop size={26} />, 66, '设备', true],
];
type Tool = { t: string; w: number; i: React.ReactNode; more?: boolean; off?: boolean };
const toolsA: Tool[] = [{ t: '型号查询(F)', w: 78, i: <FaSearch size={12} />, more: true }];
const toolsB: Tool[] = [
  { t: '保存信息(S)', w: 83, i: <FaCheck size={12} />, off: true }, { t: '内部审核', w: 62, i: <FaPrint size={12} />, more: true },
  { t: '指示检查', w: 63, i: <FaRegCheckSquare size={12} />, more: true }, { t: '发送指示', w: 63, i: <FaUpload size={12} /> },
  { t: '文控上网', w: 62, i: <FaCloudUploadAlt size={12} /> }, { t: 'ECN升级', w: 58, i: <FaRoad size={12} /> },
  { t: '重选开料图', w: 75, i: <FaRegImage size={12} />, off: true }, { t: '生成MI流程', w: 74, i: <FaCogs size={12} /> },
  { t: 'MI数据导入', w: 75, i: <FaSignInAlt size={12} />, more: true }, { t: '集成', w: 39, i: <FaDownload size={12} />, more: true },
  { t: '数据对比', w: 63, i: <FaCompressAlt size={12} />, more: true }, { t: '选择母板', w: 63, i: <FaRandom size={12} />, more: true },
  { t: '合拼模块', w: 63, i: <FaListOl size={12} /> }, { t: '导出流程信息', w: 88, i: <FaRegSmile size={12} /> },
  { t: '修复ECN丢流程', w: 93, i: <FaWrench size={12} /> }, { t: 'ECN自动上网', w: 82, i: <FaStar size={12} />, more: true },
];
const renderTool = (t: Tool) => (
  <RibbonButton key={t.t} $w={t.w} disabled={t.off}>{t.i}{t.t}{t.more && <Caret />}</RibbonButton>
);
const ScrollUp = () => <svg width="9" height="5"><path d="M0 5h9L4.500 0z" fill="#555" /></svg>;

const EdsApp = () => (
  <EdsWindow>
    <TitleBar>
      <QuickBar>
        <LogoIcon />
        <svg width="8" height="16"><path d="M7.500 0v16" stroke="#9aa9bd" /></svg>
        <Brand>兴森快捷</Brand>
        {quick.map(([icon, w, label, more]) => (
          <QuickButton key={label} $w={w} aria-label={label}>{icon}{more && <Caret />}</QuickButton>
        ))}
        <QuickButton $w={20} aria-label="自定义">
          <svg width="8" height="8"><path d="M0 1h7" stroke="#444" /><path d="M0 3h7L3.500 7z" fill="#444" /></svg>
        </QuickButton>
      </QuickBar>
      <AppTitle>EDS工程系统</AppTitle>
      <WindowButton aria-label="最小化"><svg width="10" height="10"><path d="M0 5.500h10" stroke="#000" /></svg></WindowButton>
      <WindowButton aria-label="最大化"><svg width="11" height="11"><path d="M.5.5h9v9h-9z" fill="none" stroke="#000" /></svg></WindowButton>
      <WindowButton aria-label="关闭"><svg width="11" height="11"><path d="M0 0l10 10M10 0L0 10" stroke="#000" /></svg></WindowButton>
    </TitleBar>
    <SystemRow>
      <SystemTab>系统</SystemTab>
      <StyleButton>Style<Caret /></StyleButton>
      <WindowsIcon />
    </SystemRow>
    <Workspace>
      <Rail>
        <RailButton $h={33} aria-label="菜单">
          <svg width="22" height="19"><path d="M0 2h22M0 9h22M0 16h22" stroke={navy} strokeWidth="3" /></svg>
        </RailButton>
        <RailRule />
        <RailButton $h={47} aria-label="工厂"><FactoryIcon /></RailButton>
        <RailButton $h={44} $active aria-label="计算"><CalcIcon /></RailButton>
      </Rail>
      <Library>
        <LibraryHead>
          <span>组件库</span>
          <HeadButton aria-label="收起"><svg width="6" height="10"><path d="M6 0v10L0 5z" fill={navy} /></svg></HeadButton>
          <FaSignInAlt size={14} />
        </LibraryHead>
        {['文件处理', '设计算法', '数据管理'].map(t => (
          <LibraryTab key={t} $active={t === '数据管理'}><ListIcon /><span>{t}</span></LibraryTab>
        ))}
        <LibraryItem><BoltIcon w={24} h={32} />新流程指示</LibraryItem>
        <LibraryItem><BigFolder />Bom查询2</LibraryItem>
        <LibraryItem><BigFolder />预审关键物料</LibraryItem>
        <LibraryItem><PersonIcon />Nope单审核</LibraryItem>
      </Library>
      <Main>
        <DocTabs>
          <DocTab>
            <BoltIcon w={14} h={20} />新流程指示
            <CloseTab aria-label="关闭标签"><svg width="8" height="8"><path d="M1 1l6 6M7 1L1 7" stroke="#444" /></svg></CloseTab>
          </DocTab>
          <Caret size={9} />
        </DocTabs>
        <Ribbon>
          {toolsA.map(renderTool)}
          <RibbonSwitch $w={80}><Switch><SwitchKnob type="checkbox" />OFF</Switch>编写流程(R)</RibbonSwitch>
          <RibbonSwitch $w={87}><Switch><SwitchKnob type="checkbox" />OFF</Switch>启动修改(E)<br />取消(Z)</RibbonSwitch>
          {toolsB.map(renderTool)}
        </Ribbon>
        <GroupTop>
          <GroupLabel $w={66}>主要信息</GroupLabel>
          <GroupFrame>
            <Sheet>
              <InfoTable $head={33}>
                <colgroup><col width={34} />{infoCols.map(c => <col key={c[0]} width={c[1]} />)}<col /></colgroup>
                <thead><tr><CornerCell><Corner /></CornerCell>{infoCols.map(c => <th key={c[0]}>{c[0]}</th>)}<FillHead /></tr></thead>
                <tbody><tr><MarkerCell><Marker /></MarkerCell>{infoCols.map(c => <td key={c[0]}>{c[2]}</td>)}<td /></tr></tbody>
              </InfoTable>
            </Sheet>
            <Sheet $w={200}>
              <InfoTable $head={21}><thead><tr><th>合拼型号</th><th>生产型号</th></tr></thead></InfoTable>
            </Sheet>
          </GroupFrame>
        </GroupTop>
        <Splitter $across><Grip across /></Splitter>
        <Lower>
          <FlowGroup>
            <GroupLabel $w={150}>【8S0390U5A0】工艺流程</GroupLabel>
            <GroupFrame>
              <VerticalTabs>
                <VerticalTab>
                  <svg width="21" height="90"><path d="M21 .5H4Q1.500 .5 1.500 3V68L21 89" fill="#a9c6ef" stroke="#3f66a3" /></svg>
                  <span>设备结构</span>
                </VerticalTab>
              </VerticalTabs>
              <DevicePanel>
                <DeviceHead>单击节点加载工艺流程<FaComment size={24} color="#c2c400" /></DeviceHead>
                <DeviceList />
                <DeviceRest />
              </DevicePanel>
              <Splitter><Grip /></Splitter>
              <TreePane>
                <TreeClip>
                  <TreeTable>
                    <colgroup><col width={155} /><col width={55} /><col width={75} /><col width={75} /><col /></colgroup>
                    <thead><tr><th>流程</th><th><Latin>BOM</Latin>工厂</th><th>编写人</th><th>核审人</th><th>状态</th></tr></thead>
                    <tbody>
                      {treeData.flatMap(([folder, leaves], i) => [
                        folder && <TreeEntry key={i} name={folder} />,
                        ...leaves.map((l, j) => (
                          <TreeEntry key={`${i}-${j}`} leaf name={l.replace('*', '')} end={j === leaves.length - 1} active={l.endsWith('*')} />
                        )),
                      ])}
                    </tbody>
                  </TreeTable>
                </TreeClip>
                <ScrollTrack>
                  <ScrollUp />
                  <ScrollThumb><svg width="9" height="8"><path d="M0 .5h9M0 3.500h9M0 6.500h9" stroke="#777" /></svg></ScrollThumb>
                </ScrollTrack>
              </TreePane>
            </GroupFrame>
          </FlowGroup>
          <Splitter><Grip /></Splitter>
          <Details>
            <DetailTabs>
              <DetailTab $w={69} $active>基本信息</DetailTab>
              <DetailTab $w={64}>拓展信息</DetailTab>
              <DetailTab $w={46}>BOM</DetailTab>
              <DetailTab $w={38}>工时</DetailTab>
              <Caret size={9} color="#000" />
            </DetailTabs>
            <DetailBody>
              <Pane $w={378}>
                <PaneTabs><PaneTab><TabShape /><span>基本参数</span></PaneTab></PaneTabs>
                <PaneBox>
                  <ParamTable>
                    <colgroup><col width={34} /><col width={148} /><col width={119} /><col width={33} /><col width={25} /><col /></colgroup>
                    <thead><tr><CornerCell><Corner /></CornerCell><th>项目</th><th>参数</th><th>单位</th><th>修...</th><FillHead /></tr></thead>
                    <tbody>
                      {params.map(([name, value, unit], i) => (
                        <tr key={name}>
                          <td>{i === 9 && <Marker />}</td>
                          <ParamName $key={i === 5}>{name}</ParamName>
                          <ParamValue $active={i === 9}>{value}</ParamValue>
                          <td>{unit}</td><td>Y</td><td />
                        </tr>
                      ))}
                    </tbody>
                  </ParamTable>
                </PaneBox>
              </Pane>
              <Splitter><Grip /></Splitter>
              <Pane>
                <PaneTabs><PaneTab><TabShape /><span>工艺备注</span></PaneTab></PaneTabs>
                <PaneBox>
                  <Note $w={199}>
                    <NoteHead htmlFor="note-craft">工艺备注</NoteHead>
                    <NoteBody><NoteText id="note-craft" readOnly /><span><Chevron /></span></NoteBody>
                  </Note>
                  <Note>
                    <NoteHead htmlFor="note-model">型号备注</NoteHead>
                    <NoteBody><NoteText id="note-model" readOnly /><span><Chevron /></span></NoteBody>
                  </Note>
                </PaneBox>
              </Pane>
            </DetailBody>
          </Details>
        </Lower>
      </Main>
    </Workspace>
  </EdsWindow>
);

const Annotation = styled.svg`
  position: absolute;
  left: 1354px;
  top: 600px;
  pointer-events: none;
`;

export default function App() {
  return (
    <Desktop>
      <Global />
      <GraphicEditor />
      <SideWindow />
      <CamTool />
      <EdsApp />
      <Annotation width="250" height="50">
        <path d="M30 13l214 28.500" stroke="#fb0606" strokeWidth="5" strokeLinecap="round" />
        <path d="M2 10L31 5v16z" fill="#fb0606" />
      </Annotation>
    </Desktop>
  );
}
